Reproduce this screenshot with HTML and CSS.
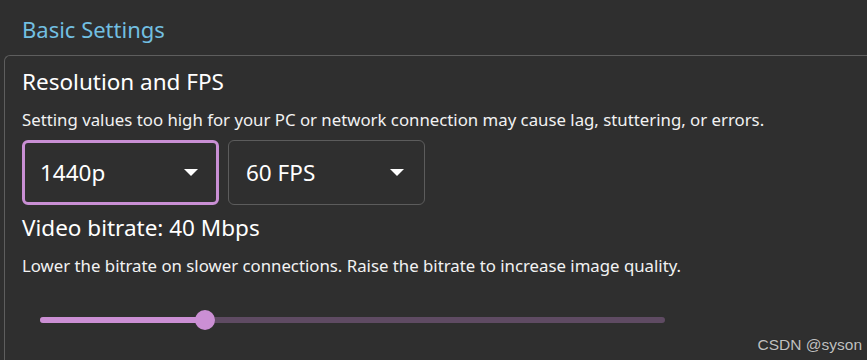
FILE: index.html
```html
<!DOCTYPE html>
<html lang="en">
<head>
<meta charset="utf-8">
<title>Basic Settings</title>
<link rel="stylesheet" href="styles.css">
</head>
<body>
<div class="page">
  <h2 class="section-title">Basic Settings</h2>
  <section class="card">
    <h3 class="setting-title">Resolution and FPS</h3>
    <p class="setting-desc">Setting values too high for your PC or network connection may cause lag, stuttering, or errors.</p>
    <div class="selects">
      <div class="select select-focused"><span class="select-value">1440p</span><span class="caret"></span></div>
      <div class="select"><span class="select-value">60 FPS</span><span class="caret"></span></div>
    </div>
    <h3 class="setting-title bitrate-title">Video bitrate: 40 Mbps</h3>
    <p class="setting-desc">Lower the bitrate on slower connections. Raise the bitrate to increase image quality.</p>
    <div class="slider">
      <div class="track">
        <div class="fill" style="width: 165px"></div>
        <div class="thumb" style="left: 165px"></div>
      </div>
    </div>
  </section>
</div>
<div class="watermark">CSDN @syson</div>
</body>
</html>
```
FILE: styles.css
```css
html, body {
  margin: 0;
  padding: 0;
  background: #2f2f2f;
  height: 100%;
  overflow: hidden;
}
body {
  font-family: "Noto Sans", "Open Sans", sans-serif;
  color: #ffffff;
  position: relative;
}
.page {
  padding-left: 4px;
}
.section-title {
  margin: 0;
  padding: 14px 0 0 18px;
  height: 55px;
  box-sizing: border-box;
  font-size: 22px;
  font-weight: 400;
  line-height: 30px;
  color: #72bfe1;
}
.card {
  box-sizing: border-box;
  height: calc(100vh - 55px);
  border: 1px solid #5e5e5e;
  border-right: none;
  border-bottom: none;
  border-radius: 6px 0 0 0;
  padding: 11px 0 0 17px;
}
.setting-title {
  margin: 0;
  font-size: 22.5px;
  font-weight: 400;
  line-height: 30px;
  color: #ffffff;
}
.setting-desc {
  margin: 12px 0 0;
  font-size: 16.8px;
  line-height: 22px;
  color: #f2f2f2;
  white-space: nowrap;
}
.selects {
  display: flex;
  gap: 9px;
  margin-top: 9px;
}
.select {
  box-sizing: border-box;
  width: 197px;
  height: 65px;
  border: 1px solid #5c5c5c;
  border-radius: 6px;
  display: flex;
  align-items: center;
  justify-content: space-between;
  padding: 0 20px 0 17px;
}
.select-focused {
  border: 3px solid #c98fd4;
  padding: 0 18px 0 15px;
}
.select-value {
  font-size: 22.5px;
  line-height: 30px;
  color: #ffffff;
}
.caret {
  width: 0;
  height: 0;
  border-left: 7px solid transparent;
  border-right: 7px solid transparent;
  border-top: 7px solid #ffffff;
}
.bitrate-title {
  margin-top: 8px;
}
.slider {
  margin: 40px 0 0 18px;
  width: 625px;
}
.track {
  position: relative;
  height: 6px;
  border-radius: 3px;
  background: #5f4b63;
}
.fill {
  height: 6px;
  border-radius: 3px;
  background: #cb8fd4;
}
.thumb {
  position: absolute;
  top: -7px;
  width: 20px;
  height: 20px;
  margin-left: -10px;
  border-radius: 50%;
  background: #cb8fd4;
}
.watermark {
  position: absolute;
  right: 5px;
  bottom: 6px;
  font-family: "Liberation Sans", Arial, sans-serif;
  font-size: 15.5px;
  color: #c0c0c0;
  text-shadow: 0 0 1px #222;
}
```
